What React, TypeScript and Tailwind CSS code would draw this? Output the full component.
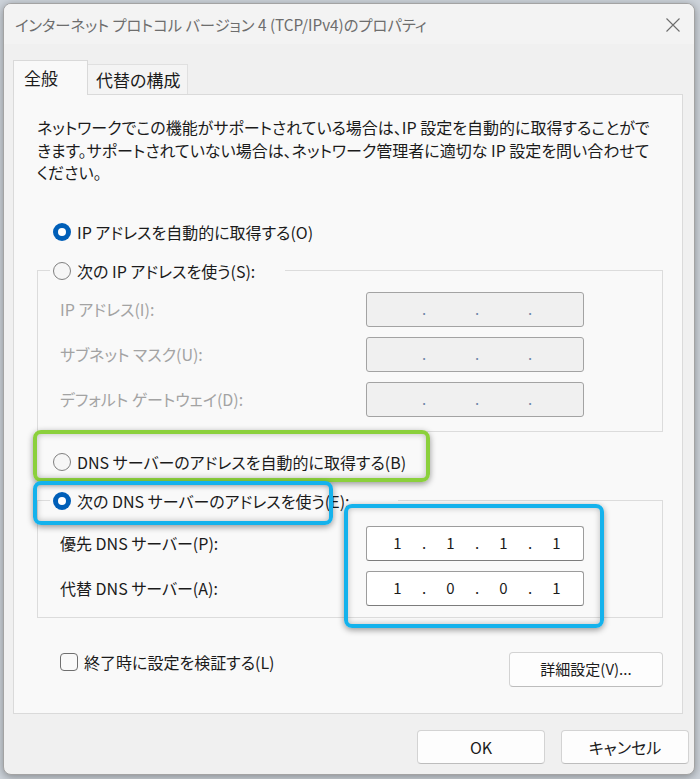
import React from 'react';

const font = "font-['Noto_Sans_CJK_JP','Noto_Sans',sans-serif] [font-feature-settings:'palt']";

const Radio: React.FC<{ checked?: boolean }> = ({ checked }) =>
  checked ? (
    <span className="flex h-[18px] w-[18px] shrink-0 items-center justify-center rounded-full bg-[#005fb8]">
      <span className="h-[8px] w-[8px] rounded-full bg-white" />
    </span>
  ) : (
    <span className="h-[18px] w-[18px] shrink-0 rounded-full border-[1.5px] border-[#808080] bg-[#f6f6f6]" />
  );

const IpBox: React.FC<{ parts?: string[]; disabled?: boolean }> = ({ parts, disabled }) => {
  const cells = parts ?? ['', '', '', ''];
  return (
    <div
      className={`flex h-[35px] w-[218px] items-center rounded-[3px] border pl-[4px] text-[15px] ${
        disabled
          ? 'border-[#a3a3a3] bg-[#f0f0f0] text-[#8a8a8a]'
          : 'border-[#9c9c9c] border-b-[#7c7c7c] bg-white text-[#1b1b1b]'
      }`}
    >
      {cells.map((c, i) => (
        <React.Fragment key={i}>
          {i > 0 && (
            <span className={`flex w-0 justify-center ${disabled ? 'text-[#6f86a8]' : ''}`}>.</span>
          )}
          <span className="w-[53px] text-center">{c}</span>
        </React.Fragment>
      ))}
    </div>
  );
};

const Button: React.FC<{ label: string; className?: string }> = ({ label, className }) => (
  <button
    className={`flex items-center justify-center rounded-[4px] border border-[#d3d3d3] border-b-[#bdbdbd] bg-[#fdfdfd] text-[15px] text-[#1b1b1b] ${className ?? ''}`}
  >
    {label}
  </button>
);

export default function App() {
  return (
    <div className={`h-[779px] w-[700px] overflow-hidden bg-[#cdd3da] ${font}`}>
      <div className="relative ml-[3px] mt-[3px] h-[772px] w-[692px] overflow-hidden rounded-[8px] border border-[#a3a3a3] bg-[#f0f0f0] shadow-[0_2px_8px_rgba(0,0,0,0.35)]">
        {/* title bar */}
        <div className="flex h-[40px] items-center justify-between bg-[#f3f3f3] pl-[11px] pr-[14px]">
          <span className="text-[15.3px] text-[#6d6d6d]">インターネット プロトコル バージョン 4 (TCP/IPv4)のプロパティ</span>
          <svg width="14" height="14" viewBox="0 0 14 14" className="mt-[2px] text-[#6d6d6d]">
            <path d="M0.5 0.5 L13.5 13.5 M13.5 0.5 L0.5 13.5" stroke="currentColor" strokeWidth="1.1" fill="none" />
          </svg>
        </div>

        <div className="pl-[9px] pt-[16px]">
          {/* tabs */}
          <div className="flex items-end">
            <div className="relative z-10 mb-[-1px] flex h-[35px] w-[75px] items-center border border-b-0 border-[#d9d9d9] bg-[#f9f9f9] pl-[10px] text-[17px] text-[#1b1b1b]">
              全般
            </div>
            <div className="flex h-[30px] w-[100px] items-center border-r border-t border-[#e0e0e0] bg-[#f4f4f4] pl-[8px] text-[17px] text-[#1b1b1b]">
              代替の構成
            </div>
          </div>

          {/* panel */}
          <div className="h-[620px] w-[670px] border border-[#dadada] bg-[#f9f9f9] pl-[23px] pt-[21px] text-[16px] text-[#1b1b1b]">
            <p className="whitespace-nowrap leading-[22.5px]">
              ネットワークでこの機能がサポートされている場合は、IP 設定を自動的に取得することがで
              <br />
              きます。サポートされていない場合は、ネットワーク管理者に適切な IP 設定を問い合わせて
              <br />
              ください。
            </p>

            <div className="mt-[37px] flex h-[22px] items-center gap-[6px] pl-[16px]">
              <Radio checked />
              <span>IP アドレスを自動的に取得する(O)</span>
            </div>

            <fieldset className="mt-[17px] w-[626px] border border-[#dcdcdc] pb-[14px]">
              <legend className="ml-[12px] flex h-[22px] items-center gap-[6px] pl-[3px] pr-[30px]">
                <Radio />
                <span>次の IP アドレスを使う(S):</span>
              </legend>
              <div className="mt-[10px] flex flex-col gap-[10px] pl-[22px] text-[#a3a3a3]">
                <div className="flex items-center">
                  <span className="w-[306px]">IP アドレス(I):</span>
                  <IpBox disabled />
                </div>
                <div className="flex items-center">
                  <span className="w-[306px]">サブネット マスク(U):</span>
                  <IpBox disabled />
                </div>
                <div className="flex items-center">
                  <span className="w-[306px]">デフォルト ゲートウェイ(D):</span>
                  <IpBox disabled />
                </div>
              </div>
            </fieldset>

            <div className="mt-[19px] flex h-[22px] items-center gap-[6px] pl-[16px]">
              <Radio />
              <span>DNS サーバーのアドレスを自動的に取得する(B)</span>
            </div>

            <fieldset className="mt-[17px] w-[626px] border border-[#dcdcdc] pb-[11px]">
              <legend className="ml-[12px] flex h-[22px] items-center gap-[6px] pl-[3px] pr-[48px]">
                <Radio checked />
                <span>次の DNS サーバーのアドレスを使う(E):</span>
              </legend>
              <div className="mt-[14px] flex flex-col gap-[10px] pl-[22px]">
                <div className="flex items-center">
                  <span className="w-[306px]">優先 DNS サーバー(P):</span>
                  <IpBox parts={['1', '1', '1', '1']} />
                </div>
                <div className="flex items-center">
                  <span className="w-[306px]">代替 DNS サーバー(A):</span>
                  <IpBox parts={['1', '0', '0', '1']} />
                </div>
              </div>
            </fieldset>

            <div className="mt-[34px] flex w-[626px] items-start justify-between">
              <div className="flex h-[20px] items-center gap-[6px] pl-[23px]">
                <span className="h-[18px] w-[18px] rounded-[4px] border border-[#6f6f6f]" />
                <span>終了時に設定を検証する(L)</span>
              </div>
              <Button label="詳細設定(V)..." className="h-[35px] w-[154px]" />
            </div>
          </div>

          {/* dialog buttons */}
          <div className="mt-[16px] flex justify-end gap-[16px] pr-[5px]">
            <Button label="OK" className="h-[34px] w-[128px] text-[16px]" />
            <Button label="キャンセル" className="h-[34px] w-[128px] text-[16px]" />
          </div>
        </div>

        {/* annotation highlights */}
        <div className="pointer-events-none absolute left-[29px] top-[426px] h-[52px] w-[397px] rounded-[8px] border-[4px] border-[#8bd03c] shadow-[0_2px_6px_rgba(0,0,0,0.4),inset_0_0_6px_rgba(0,0,0,0.25)]" />
        <div className="pointer-events-none absolute left-[29px] top-[477px] h-[44px] w-[300px] rounded-[8px] border-[4px] border-[#14b2ec] shadow-[0_2px_6px_rgba(0,0,0,0.4),inset_0_0_6px_rgba(0,0,0,0.25)]" />
        <div className="pointer-events-none absolute left-[340px] top-[500px] h-[124px] w-[260px] rounded-[8px] border-[4px] border-[#14b2ec] shadow-[0_2px_6px_rgba(0,0,0,0.4),inset_0_0_6px_rgba(0,0,0,0.25)]" />
      </div>
    </div>
  );
}
